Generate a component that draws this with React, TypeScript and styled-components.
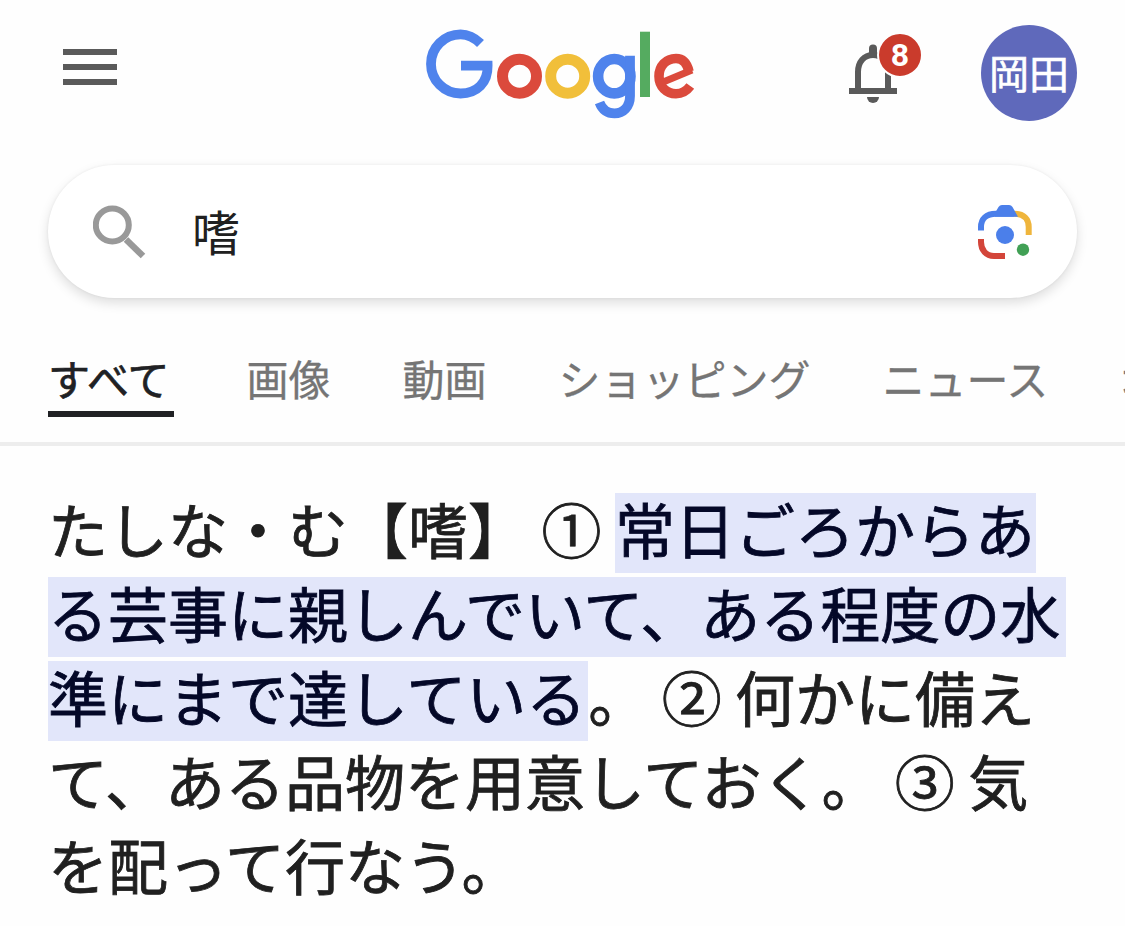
import React from 'react';
import styled, { createGlobalStyle } from 'styled-components';

const GlobalStyle = createGlobalStyle`
    * {
        box-sizing: border-box;
    }

    body {
        margin: 0;
        background: #fefefe;
        color: #202020;
        font-family: "Noto Sans CJK JP", sans-serif;
        overflow: hidden;
    }
`;

const Page = styled.div`
    width: 1125px;
    height: 926px;
    overflow: hidden;
`;

const Header = styled.header`
    display: flex;
    align-items: flex-start;
    height: 165px;
    padding: 25px 48px 0 63px;
`;

const MenuButton = styled.button`
    display: flex;
    flex-direction: column;
    gap: 9px;
    width: 54px;
    margin-top: 24px;
    padding: 0;
    border: 0;
    background: none;
`;

const MenuLine = styled.span`
    height: 6px;
    background: #5a5a5a;
`;

const Logo = styled.svg`
    display: block;
    width: 270px;
    height: 92px;
    margin: 2px 0 0 309px;
    fill: none;
    overflow: visible;
`;

const Account = styled.div`
    display: flex;
    align-items: flex-start;
    gap: 59px;
    margin-left: auto;
`;

const BellButton = styled.div`
    position: relative;
    width: 73px;
    height: 80px;
    margin-top: 8px;
`;

const Badge = styled.span`
    position: absolute;
    top: -1px;
    left: 28px;
    width: 46px;
    height: 46px;
    border: 2px solid #fefefe;
    border-radius: 50%;
    background: #ca3b2c;
    color: #fff;
    font: 700 32px/43px Roboto, sans-serif;
    text-align: center;
`;

const Avatar = styled.div`
    width: 96px;
    height: 96px;
    border-radius: 50%;
    background: #5f69bb;
    color: #fff;
    font-size: 40px;
    line-height: 94px;
    text-align: center;
    -webkit-text-stroke: 0.6px currentColor;
`;

const SearchBox = styled.div`
    display: flex;
    align-items: center;
    height: 133px;
    margin: 0 48px;
    padding: 0 45px;
    border-radius: 67px;
    background: #fff;
    box-shadow: 0 5px 12px rgba(0, 0, 0, 0.13), 0 0 3px rgba(0, 0, 0, 0.06);
`;

const Query = styled.div`
    flex: 1;
    margin-left: 45px;
    padding-bottom: 3px;
    font-size: 48px;
    line-height: 60px;
`;

const Tabs = styled.nav`
    display: flex;
    gap: 72px;
    height: 148px;
    padding: 50px 0 0 48px;
    border-bottom: 4px solid #ededed;
    white-space: nowrap;
`;

const Tab = styled.a<{ $active?: boolean }>`
    flex: none;
    height: 69px;
    padding-right: ${({ $active }) => ($active ? '5px' : '0')};
    border-bottom: 6px solid ${({ $active }) => ($active ? '#202124' : 'transparent')};
    color: ${({ $active }) => ($active ? '#202124' : '#757575')};
    font-size: 42px;
    line-height: 59px;
    -webkit-text-stroke: ${({ $active }) => ($active ? '0.7px' : '0.3px')} currentColor;

    &:last-child {
        margin-left: 2px;
    }
`;

const Answer = styled.p`
    margin: 0;
    padding: 45px 0 0 48px;
    font-size: 60px;
    white-space: nowrap;
    -webkit-text-stroke: 0.8px currentColor;
`;

const Line = styled.span`
    display: flex;
    height: 84px;
    padding-top: 2px;
    line-height: 70px;
    white-space: pre;
`;

const Mark = styled.mark<{ $trail?: number }>`
    height: 80px;
    padding-right: ${({ $trail = 0 }) => $trail}px;
    background: #e2e6fa;
    color: #040828;
`;

const tabs = ['すべて', '画像', '動画', 'ショッピング', 'ニュース', '地図'];

const GoogleLogo = () => (
    <Logo viewBox="426 27 270 92" aria-label="Google">
        <path d="M480.500 43.500C475 38 468.500 34.300 460.600 34.300A29.500 29.500 0 0 0 460.600 93.500C477 93.500 488 82.500 487.600 65.600H461" stroke="#4f83ec" strokeWidth="9.800" />
        <circle cx="519.5" cy="76.2" r="17" stroke="#db4a3c" strokeWidth="11" />
        <circle cx="567.7" cy="76.2" r="17" stroke="#f1bf3a" strokeWidth="11" />
        <ellipse cx="614.3" cy="76.2" rx="16.2" ry="17.2" stroke="#4f83ec" strokeWidth="10.6" />
        <path d="M630 55.7V96C630 107 623 113.4 614.5 113.4C607 113.4 602 109 599.5 102.5" stroke="#4f83ec" strokeWidth="9.8" />
        <path d="M645 31.7V97" stroke="#55ab60" strokeWidth="10" />
        <path d="M689 71.500C687 63 682.500 58.500 676 58.500C666 58.500 659 66 659 76.200C659 86.500 666.500 93.700 676 93.700C682.500 93.700 687 90.500 690.300 86" stroke="#db4a3c" strokeWidth="9.600" />
        <path d="M662 82.500L692 70" stroke="#db4a3c" strokeWidth="7" />
    </Logo>
);

const BellIcon = () => (
    <svg width="73" height="80" viewBox="849 33 73 80" fill="none">
        <path d="M849 91H897" stroke="#5a5a5a" strokeWidth="6" />
        <path d="M858 90V72C858 62 864 55 873 55C882 55 888 62 888 72V90" stroke="#5a5a5a" strokeWidth="6" />
        <path d="M869 57V48.500A4 4 0 0 1 877 48.500V57Z" fill="#5a5a5a" />
        <path d="M867 97H879A6 6 0 0 1 867 97Z" fill="#5a5a5a" />
    </svg>
);

const SearchIcon = () => (
    <svg width="54" height="54" viewBox="93 204 54 54" fill="none" stroke="#999">
        <circle cx="112.3" cy="224" r="16.500" strokeWidth="6" />
        <path d="M126 238.500L143 255" strokeWidth="6.500" />
    </svg>
);

const LensIcon = () => (
    <svg width="54" height="54" viewBox="978 205 54 54" fill="none" strokeWidth="6">
        <path d="M1014 213.700C1024 213.700 1028.700 219 1028.700 227V235" stroke="#efb53c" />
        <path d="M981 230.500V227C981 219 986 213.700 996 213.700H1014" stroke="#4b7fea" />
        <path d="M995 213L998.500 207Q999.700 205 1002 205H1009Q1011.300 205 1012.500 207L1018 216.700H995Z" fill="#4b7fea" />
        <path d="M981 239V242C981 250 986 256 994 256H1005" stroke="#d3453a" />
        <circle cx="1005" cy="235" r="9" fill="#4b7fea" />
        <circle cx="1023" cy="249.700" r="6.200" fill="#41a055" />
    </svg>
);

const App = () => {
    return (
        <Page>
            <GlobalStyle />
            <Header>
                <MenuButton aria-label="menu">
                    <MenuLine />
                    <MenuLine />
                    <MenuLine />
                </MenuButton>
                <GoogleLogo />
                <Account>
                    <BellButton>
                        <BellIcon />
                        <Badge>8</Badge>
                    </BellButton>
                    <Avatar>岡田</Avatar>
                </Account>
            </Header>
            <SearchBox>
                <SearchIcon />
                <Query>嗜</Query>
                <LensIcon />
            </SearchBox>
            <Tabs>
                {tabs.map((tab, i) => (
                    <Tab key={tab} $active={i === 0}>{tab}</Tab>
                ))}
            </Tabs>
            <Answer>
                <Line><span>たしな・む【嗜】 ① </span><Mark $trail={1}>常日ごろからあ</Mark></Line>
                <Line><Mark $trail={6}>る芸事に親しんでいて、ある程度の水</Mark></Line>
                <Line><Mark $trail={2}>準にまで達している</Mark><span>。 ② 何かに備え</span></Line>
                <Line>て、ある品物を用意しておく。 ③ 気</Line>
                <Line>を配って行なう。</Line>
            </Answer>
        </Page>
    );
}

export default App;
